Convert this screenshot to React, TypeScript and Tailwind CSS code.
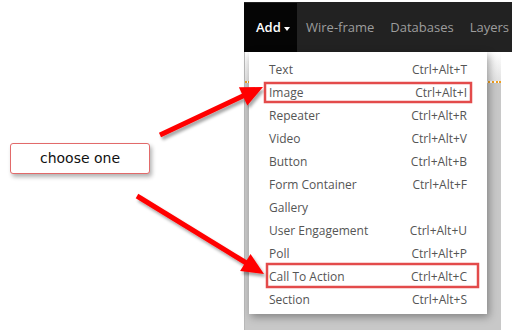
import React from 'react';

const items: [string, string][] = [
    ['Text', 'Ctrl+Alt+T'],
    ['Image', 'Ctrl+Alt+I'],
    ['Repeater', 'Ctrl+Alt+R'],
    ['Video', 'Ctrl+Alt+V'],
    ['Button', 'Ctrl+Alt+B'],
    ['Form Container', 'Ctrl+Alt+F'],
    ['Gallery', ''],
    ['User Engagement', 'Ctrl+Alt+U'],
    ['Poll', 'Ctrl+Alt+P'],
    ['Call To Action', 'Ctrl+Alt+C'],
    ['Section', 'Ctrl+Alt+S'],
];

const Annotations: React.FC = () => (
    <svg className="absolute inset-0 pointer-events-none" width={512} height={333} viewBox="0 0 512 333">
        <defs>
            <filter id="sh" x="-20%" y="-20%" width="140%" height="140%">
                <feDropShadow dx="2" dy="3" stdDeviation="1.6" floodColor="#000" floodOpacity="0.35" />
            </filter>
        </defs>
        <g filter="url(#sh)">
            <line x1={160} y1={135} x2={245} y2={95} stroke="#ff0000" strokeWidth={5} />
            <polygon points="263,87 247.3,105.4 238.9,87.2" fill="#ff0000" />
            <line x1={137} y1={196} x2={248} y2={264} stroke="#ff0000" strokeWidth={5} />
            <polygon points="264,274 240.1,271 250.5,254" fill="#ff0000" />
        </g>
        <rect x={265} y={83} width={206} height={19} fill="none" stroke="#e34b4b" strokeWidth={2.5} />
        <rect x={267} y={264} width={211} height={23} fill="none" stroke="#e34b4b" strokeWidth={2.5} />
    </svg>
);

const App: React.FC = () => {
    return (
        <div className="relative w-[512px] h-[333px] bg-white overflow-hidden">
            <div className="flex h-full">
                {/* left side with the note */}
                <div className="w-[244px] pt-[143px] pl-[10px]">
                    <div
                        className="w-[140px] h-[31px] flex items-center justify-center rounded-[3px] border-[1.5px] border-[#e26a6a] bg-white shadow-[2px_3px_4px_rgba(0,0,0,0.3)] text-[14px] text-[#111]"
                        style={{ fontFamily: '"DejaVu Sans", Verdana, sans-serif' }}
                    >
                        choose one
                    </div>
                </div>

                {/* editor */}
                <div className="w-[268px] pt-[2px] flex flex-col" style={{ fontFamily: '"Open Sans", sans-serif' }}>
                    <nav className="h-[50px] flex items-center pt-[1px] bg-[#222222] text-[13px] text-[#9d9d9d] whitespace-nowrap overflow-hidden">
                        <div className="h-full w-[53px] shrink-0 flex items-center pl-[12px] bg-[#050505] text-white font-semibold">
                            Add
                            <span className="ml-[3px] mt-[2px] border-x-[3.5px] border-x-transparent border-t-[4px] border-t-white" />
                        </div>
                        <span className="pl-[9px] pr-[8px]">Wire-frame</span>
                        <span className="px-[8px]">Databases</span>
                        <span className="px-[8px]">Layers</span>
                    </nav>

                    <div className="flex">
                        <div className="relative w-[257px] h-[278px] flex flex-col border-l border-[#b8b8b8]">
                            <div className="h-[29px] bg-gradient-to-b from-white to-[#e2e2e2]" />
                            <div className="border-t-2 border-dotted border-[#f0a020]" />
                            <div className="flex-1 bg-[#c8c8c8]" />

                            <div className="absolute top-0 left-[4px] w-[238px] bg-white pt-[6px] pb-[3px] shadow-[2px_3px_8px_rgba(0,0,0,0.35)] text-[12px] text-[#555]">
                                {items.map(([label, key]) => (
                                    <div key={label} className="h-[23px] flex items-center justify-between px-[20px]">
                                        <span>{label}</span>
                                        <span>{key}</span>
                                    </div>
                                ))}
                            </div>
                        </div>
                        <div className="flex-1" />
                    </div>
                </div>
            </div>
            <Annotations />
        </div>
    );
};

export default App;
